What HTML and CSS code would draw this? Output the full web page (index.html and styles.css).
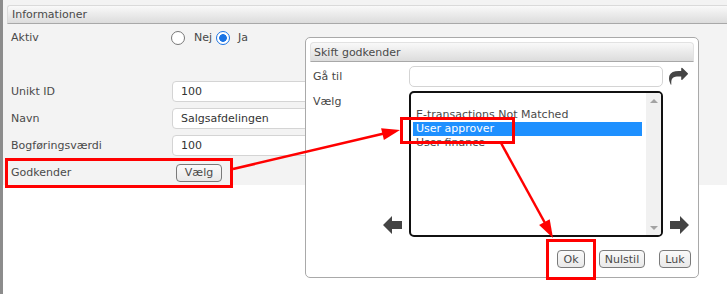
FILE: index.html
```html
<!DOCTYPE html>
<html lang="da">
<head>
    <meta charset="UTF-8">
    <title>Skift godkender</title>
    <link rel="stylesheet" href="styles.css">
</head>
<body>
    <div class="screen">
        <div class="panel">
            <div class="panel-head">Informationer</div>
            <div class="form">
                <div class="row">
                    <span class="label">Aktiv</span>
                    <div class="radios">
                        <span class="radio"></span><span class="radio-text">Nej</span>
                        <span class="radio checked"></span><span class="radio-text">Ja</span>
                    </div>
                </div>
                <div class="row"></div>
                <div class="row">
                    <span class="label">Unikt ID</span>
                    <div class="field">100</div>
                </div>
                <div class="row">
                    <span class="label">Navn</span>
                    <div class="field">Salgsafdelingen</div>
                </div>
                <div class="row">
                    <span class="label">Bogføringsværdi</span>
                    <div class="field">100</div>
                </div>
                <div class="row">
                    <span class="label">Godkender</span>
                    <button class="btn btn-pick">Vælg</button>
                </div>
            </div>
        </div>

        <div class="dialog">
            <div class="dialog-head">Skift godkender</div>
            <div class="dialog-body">
                <span class="dlabel">Gå til</span>
                <div class="goto-field"></div>
                <div class="icon-cell">
                    <svg class="share-icon" viewBox="0 0 1792 1792" width="19" height="19">
                        <path d="M1792 640q0 26-19 45l-512 512q-19 19-45 19t-45-19-19-45v-256h-224q-98 0-175.5 6t-154 21.5-133 42.5-105.5 69.5-80 101-48.5 138.5-17.5 181q0 55 5 123 0 6 2.5 23.5t2.5 26.5q0 15-8.5 25t-23.5 10q-16 0-28-17-7-9-13-22t-13.5-30-10.5-24q-127-285-127-451 0-199 53-333 162-403 875-403h224v-256q0-26 19-45t45-19 45 19l512 512q19 19 19 45z" fill="#444"/>
                    </svg>
                </div>

                <div class="dlabel list-label">
                    <span>Vælg</span>
                    <svg class="move-arrow" viewBox="0 0 19 18" width="19" height="18">
                        <polygon points="0,9 9,0 9,5 19,5 19,13 9,13 9,18" fill="#444"/>
                    </svg>
                </div>
                <div class="listbox">
                    <div class="options">
                        <div class="option"></div>
                        <div class="option">E-transactions Not Matched</div>
                        <div class="option selected">User approver</div>
                        <div class="option">User finance</div>
                    </div>
                    <div class="scrollbar">
                        <span class="scroll-up"></span>
                        <span class="scroll-down"></span>
                    </div>
                </div>
                <div class="icon-cell icon-bottom">
                    <svg class="move-arrow" viewBox="0 0 19 18" width="19" height="18">
                        <polygon points="19,9 10,0 10,5 0,5 0,13 10,13 10,18" fill="#444"/>
                    </svg>
                </div>
            </div>
            <div class="dialog-buttons">
                <button class="btn btn-ok">Ok</button>
                <button class="btn btn-reset">Nulstil</button>
                <button class="btn btn-close">Luk</button>
            </div>
        </div>

        <!-- annotations on top of the screenshot -->
        <svg class="annotations" width="727" height="294">
            <rect x="6.5" y="159.5" width="225" height="27" fill="none" stroke="#f00" stroke-width="3"/>
            <rect x="401.5" y="118.5" width="112" height="24" fill="none" stroke="#f00" stroke-width="3"/>
            <rect x="547.5" y="240.5" width="47" height="38" fill="none" stroke="#f00" stroke-width="3"/>
            <line x1="233" y1="169" x2="384" y2="133.5" stroke="#f00" stroke-width="2.5"/>
            <polygon points="400,130 383.9,139.9 381.1,128.3" fill="#f00"/>
            <line x1="501" y1="143" x2="545" y2="223" stroke="#f00" stroke-width="2.5"/>
            <polygon points="553,238 539.1,225.1 549.7,219.3" fill="#f00"/>
        </svg>
    </div>
</body>
</html>
```

FILE: styles.css
```css
body {
    margin: 0;
    font-family: "DejaVu Sans", Verdana, sans-serif;
    font-size: 11px;
    color: #474747;
    background-color: #fff;
}

.screen {
    position: relative;
    height: 294px;
    border-left: 3px solid #8c8c8c;
    overflow: hidden;
}

.panel {
    background-color: #f3f3f3;
    padding: 5px 0 0 4px;
    height: 185px;
    box-sizing: border-box;
}

.panel-head {
    height: 17px;
    line-height: 17px;
    padding-left: 4px;
    border: 1px solid #dadada;
    border-bottom-color: #a8a8a8;
    border-right: none;
    border-radius: 3px 0 0 0;
    background: linear-gradient(#f9f9f9, #dcdcdc);
    color: #4a4a4a;
}

.form {
    padding-left: 4px;
}

.row {
    display: grid;
    grid-template-columns: 161px auto;
    align-items: center;
    height: 27px;
}

.label {
    color: #4a4a4a;
}

.radios {
    display: flex;
    align-items: center;
    margin-left: -1px;
}

.radio {
    width: 12px;
    height: 12px;
    border: 1px solid #777;
    border-radius: 50%;
    background-color: #fff;
}

.radio.checked {
    border-color: #1b74e4;
    background: radial-gradient(circle, #1b74e4 0 3.5px, #fff 4.2px);
}

.radio-text {
    margin: 0 4px 0 9px;
}

.radio-text:last-child {
    margin-left: 8px;
}

.field {
    width: 200px;
    height: 21px;
    line-height: 19px;
    box-sizing: border-box;
    padding-left: 8px;
    border: 1px solid #d4d4d4;
    border-radius: 4px;
    background-color: #fff;
    color: #333;
}

.btn {
    font-family: inherit;
    font-size: 11px;
    color: #4a4a4a;
    height: 18px;
    padding: 0;
    border: 1px solid #7a7a7a;
    border-radius: 4px;
    background: linear-gradient(#fafafa, #e9e9e9);
}

.btn-pick {
    width: 46px;
    height: 18px;
    margin-left: 4px;
}

.dialog {
    position: absolute;
    left: 302px;
    top: 37px;
    width: 394px;
    height: 241px;
    box-sizing: border-box;
    padding: 4px 4px 0 4px;
    border: 1px solid #a9a9a9;
    border-radius: 5px;
    background-color: #fff;
}

.dialog-head {
    height: 20px;
    line-height: 19px;
    padding-left: 3px;
    border: 1px solid #e2e2e2;
    border-bottom-color: #a8a8a8;
    border-radius: 4px 4px 0 0;
    background: linear-gradient(#f9f9f9, #dcdcdc);
    color: #4a4a4a;
    box-sizing: border-box;
}

.dialog-body {
    display: grid;
    grid-template-columns: 99px 254px 31px;
    row-gap: 4px;
    margin-top: 4px;
}

.dlabel {
    padding-left: 3px;
    align-self: center;
}

.list-label {
    align-self: stretch;
    display: flex;
    flex-direction: column;
    justify-content: space-between;
    padding-top: 4px;
    padding-bottom: 3px;
}

.list-label .move-arrow {
    align-self: flex-end;
    margin-right: 7px;
}

.goto-field {
    height: 21px;
    box-sizing: border-box;
    border: 1px solid #d4d4d4;
    border-radius: 5px;
    background-color: #fff;
}

.icon-cell {
    display: flex;
    align-items: center;
    justify-content: center;
}

.share-icon {
    margin-left: -1px;
}

.icon-bottom {
    align-items: flex-end;
    padding-bottom: 3px;
    padding-left: 2px;
}

.listbox {
    display: flex;
    height: 146px;
    box-sizing: border-box;
    border: 2px solid #111;
    border-radius: 5px;
    overflow: hidden;
}

.options {
    flex: 1;
    padding: 1px 4px 0 2px;
}

.option {
    height: 14px;
    line-height: 14px;
    padding-left: 3px;
    color: #4a4a4a;
}

.option.selected {
    background-color: #1e90ff;
    color: #fff;
}

.scrollbar {
    width: 15px;
    background-color: #f1f1f1;
    display: flex;
    flex-direction: column;
    justify-content: space-between;
    align-items: center;
    padding: 6px 0 5px;
}

.scroll-up {
    border-left: 4px solid transparent;
    border-right: 4px solid transparent;
    border-bottom: 4px solid #a3a3a3;
}

.scroll-down {
    border-left: 4px solid transparent;
    border-right: 4px solid transparent;
    border-top: 4px solid #a3a3a3;
}

.dialog-buttons {
    display: flex;
    justify-content: flex-end;
    gap: 14px;
    margin-top: 13px;
    padding-right: 3px;
}

.btn-ok {
    width: 28px;
}

.btn-reset {
    width: 46px;
}

.btn-close {
    width: 32px;
}

.annotations {
    position: absolute;
    left: -3px;
    top: 0;
    pointer-events: none;
}
```
